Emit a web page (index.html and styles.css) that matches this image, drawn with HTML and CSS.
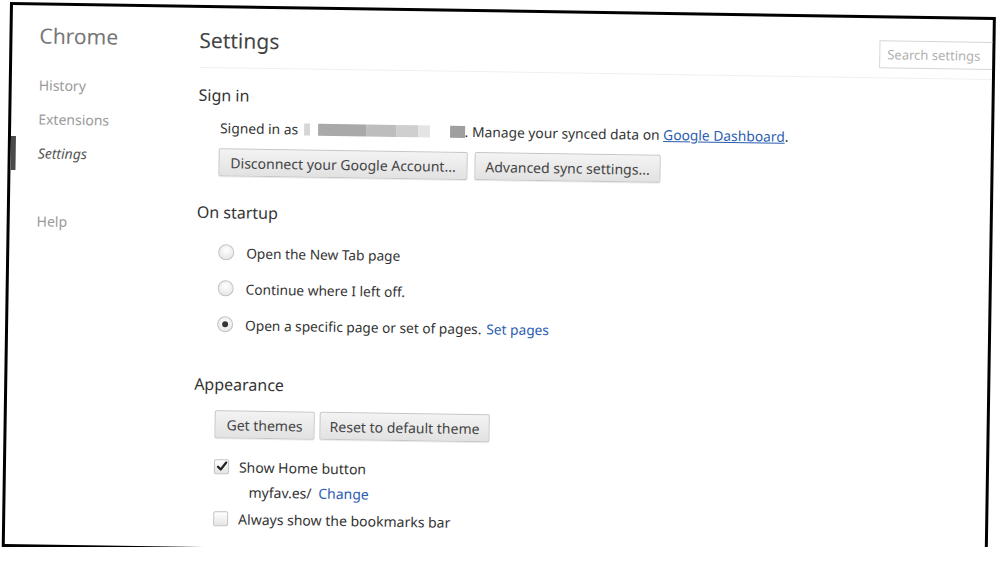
FILE: index.html
```html
<!DOCTYPE html>
<html lang="en">
<head>
  <meta charset="UTF-8">
  <title>Settings</title>
  <link rel="stylesheet" href="styles.css">
</head>
<body>
  <div class="frame">
    <nav class="nav">
      <h1 class="brand">Chrome</h1>
      <ul class="nav-list">
        <li>History</li>
        <li>Extensions</li>
        <li class="active">Settings</li>
        <li class="help">Help</li>
      </ul>
    </nav>

    <main class="main">
      <header class="main-head">
        <h2>Settings</h2>
        <div class="search">Search settings</div>
      </header>

      <section class="section">
        <h3>Sign in</h3>
        <div class="line signed">
          Signed in as
          <span class="blur">
            <i style="width:6px;background:#d6d6d6"></i>
            <i style="width:8px;background:#fff"></i>
            <i style="width:48px;background:#a9a9a9"></i>
            <i style="width:30px;background:#bdbdbd"></i>
            <i style="width:22px;background:#cfcfcf"></i>
            <i style="width:12px;background:#e4e4e4"></i>
            <i style="width:20px;background:#fff"></i>
            <i style="width:15px;background:#9f9f9f"></i>
          </span>. Manage your synced data on <a href="#" class="link under">Google Dashboard</a>.
        </div>
        <div class="buttons">
          <button class="btn" style="width:249px">Disconnect your Google Account...</button>
          <button class="btn" style="width:186px">Advanced sync settings...</button>
        </div>
      </section>

      <section class="section startup">
        <h3>On startup</h3>
        <label class="radio-row"><span class="radio"></span>Open the New Tab page</label>
        <label class="radio-row"><span class="radio"></span>Continue where I left off.</label>
        <label class="radio-row"><span class="radio checked"></span>Open a specific page or set of pages. <a href="#" class="link set">Set pages</a></label>
      </section>

      <section class="section appearance">
        <h3>Appearance</h3>
        <div class="buttons">
          <button class="btn" style="width:100px">Get themes</button>
          <button class="btn" style="width:170px">Reset to default theme</button>
        </div>
        <label class="check-row">
          <span class="check on">
            <svg width="12" height="12" viewBox="0 0 12 12"><path d="M2 6.5 L4.8 9.3 L10.2 2.2" fill="none" stroke="#222" stroke-width="2.2" stroke-linecap="round" stroke-linejoin="round"/></svg>
          </span>Show Home button
        </label>
        <div class="home-url">myfav.es/ <a href="#" class="link">Change</a></div>
        <label class="check-row"><span class="check"></span>Always show the bookmarks bar</label>
      </section>
    </main>
  </div>
</body>
</html>
```

FILE: styles.css
```css
body { margin: 0; background: #fff; font-family: "Noto Sans", "Open Sans", sans-serif; color: #333; }

.frame {
  box-sizing: border-box;
  width: 986px; height: 545px;
  margin: 2px 0 0 10px;
  border: 3px solid #000;
  background: #fff;
  display: flex;
  overflow: hidden;
  transform: rotate(0.87deg);
  transform-origin: 0 0;
}

.nav { width: 187px; flex: none; }
.brand { margin: 0; padding: 15px 0 0 27px; font-size: 21px; line-height: 30px; font-weight: normal; color: #777; }
.nav-list { list-style: none; margin: 18px 0 0; padding: 0; }
.nav-list li { height: 34px; line-height: 34px; padding-left: 27px; font-size: 14px; color: #9a9a9a; }
.nav-list li.active { border-left: 5px solid #4a4a4a; padding-left: 22px; color: #555; font-style: italic; }
.nav-list li.help { margin-top: 34px; }

.main { flex: 1; min-width: 0; }
.main-head { display: flex; justify-content: space-between; align-items: flex-start; height: 59px; border-bottom: 1px solid #f0f0f0; }
.main-head h2 { margin: 17px 0 0; font-size: 21px; line-height: 30px; font-weight: normal; color: #444; }
.search {
  flex: none; width: 125px; height: 28px; margin-top: 22px; margin-right: -12px;
  box-sizing: border-box; border: 1px solid #d6d6d6; padding: 0 7px;
  font-size: 13px; line-height: 26px; color: #b0b0b0;
}

.section h3 { margin: 0; font-size: 16px; line-height: 22px; font-weight: normal; color: #333; }
.section:first-of-type h3 { margin-top: 16px; }
.line { margin: 12px 0 0 22px; font-size: 13.8px; line-height: 20px; }
.blur { display: inline-flex; height: 12px; vertical-align: -1px; margin-left: 2px; }
.blur i { display: block; height: 12px; }
.link { color: #2a5db0; text-decoration: none; }
.link.under { text-decoration: underline; }

.buttons { display: flex; gap: 7px; margin: 10px 0 0 21px; }
.btn {
  height: 28px; box-sizing: border-box; padding: 0 8px;
  border: 1px solid #c6c6c6; border-radius: 2px;
  background: linear-gradient(#f3f3f3, #e2e2e2);
  box-shadow: 0 1px 0 rgba(0,0,0,0.08);
  font-family: inherit; font-size: 14px; color: #444;
}

.startup { margin-top: 25px; }
.radio-row { display: flex; align-items: center; height: 36px; margin-left: 22px; font-size: 13.7px; }
.startup h3 + .radio-row { margin-top: 11px; }
.radio {
  width: 16px; height: 16px; box-sizing: border-box; margin-right: 12px;
  border: 1px solid #c2c2c2; border-radius: 50%;
  background: radial-gradient(circle at 50% 35%, #fff, #e0e0e0);
  display: flex; align-items: center; justify-content: center;
}
.radio.checked::after { content: ""; width: 6px; height: 6px; border-radius: 50%; background: #333; }
.link.set { margin-left: 5px; }

.appearance { margin-top: 31px; }
.appearance .buttons { margin-top: 15px; gap: 5px; }
.check-row { display: flex; align-items: center; height: 26px; margin-left: 21px; font-size: 14px; }
.appearance .buttons + .check-row { margin-top: 15px; }
.check {
  width: 15px; height: 15px; box-sizing: border-box; margin-right: 10px;
  border: 1px solid #c2c2c2; border-radius: 2px;
  background: linear-gradient(#fff, #e4e4e4);
  display: flex; align-items: center; justify-content: center;
}
.home-url { height: 26px; line-height: 26px; margin-left: 56px; font-size: 14px; }
.home-url .link { margin-left: 3px; }
```
